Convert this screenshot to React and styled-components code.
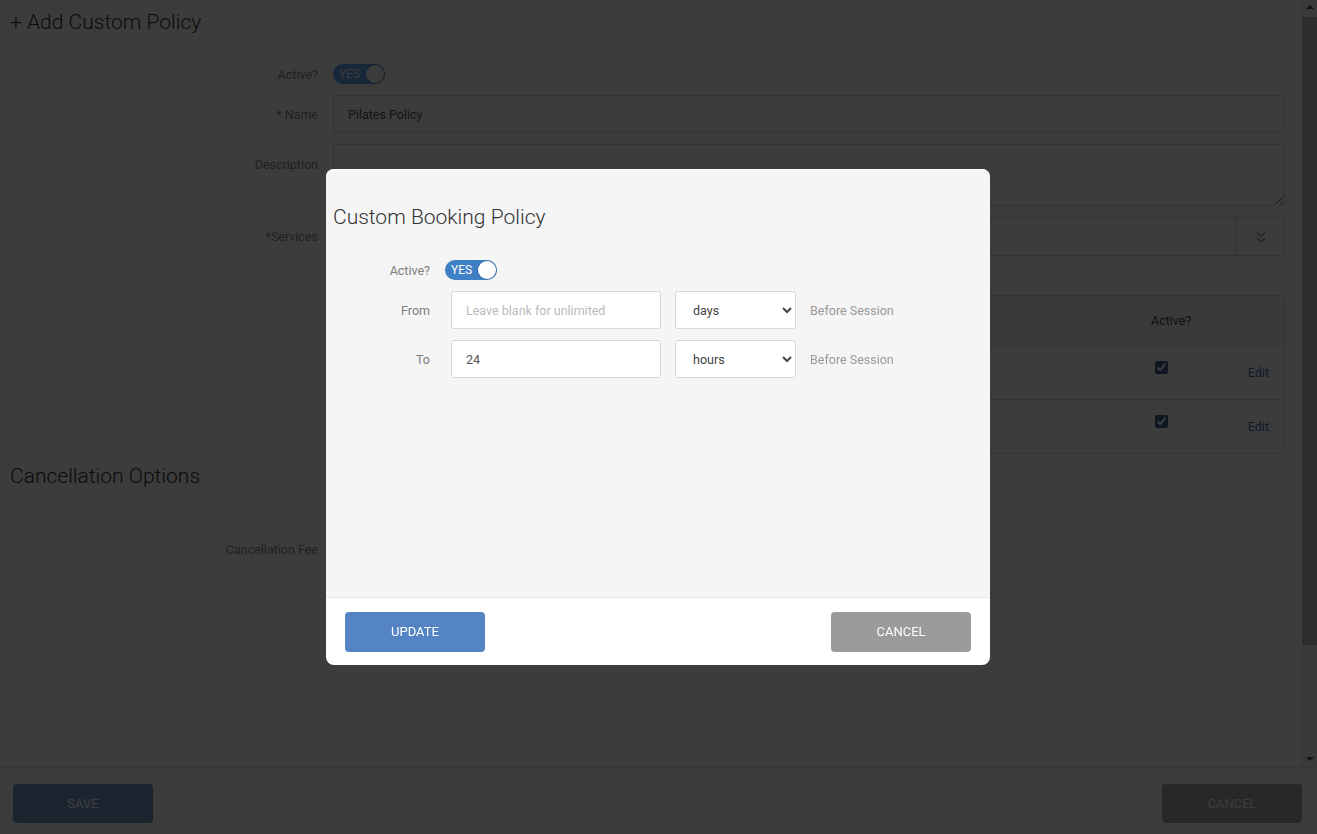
import React from "react";
import styled, { createGlobalStyle } from "styled-components";

const GlobalStyle = createGlobalStyle`
  html, body {
    margin: 0;
    padding: 0;
    height: 100%;
    overflow: hidden;
    background: #fff;
    font-family: Roboto, "Liberation Sans", sans-serif;
  }
  * { box-sizing: border-box; }
`;

const font = `Roboto, "Liberation Sans", sans-serif`;

//배경 페이지
const Page = styled.div`
  display: flex;
  flex-direction: column;
  height: 100vh;
`;

const Main = styled.div`
  flex: 1;
  display: flex;
  min-height: 0;
`;

const ScrollArea = styled.div`
  flex: 1;
  overflow: hidden;
`;

//스크롤바
const Scrollbar = styled.div`
  width: 15px;
  flex: none;
  display: flex;
  flex-direction: column;
  background: #f1f1f1;
`;

const ScrollArrow = styled.div`
  height: 17px;
  flex: none;
  display: flex;
  justify-content: center;
  align-items: ${(p) => (p.down ? "flex-end" : "flex-start")};
  padding: ${(p) => (p.down ? "0 0 6px" : "5px 0 0")};
  &::before {
    content: "";
    border-left: 4px solid transparent;
    border-right: 4px solid transparent;
    ${(p) =>
      p.down ? "border-top: 4px solid #505050;" : "border-bottom: 4px solid #505050;"}
  }
`;

const ScrollThumb = styled.div`
  height: ${(p) => p.size}px;
  flex: none;
  background: #c1c1c1;
`;

const ScrollTrack = styled.div`
  flex: 1;
`;

const Content = styled.div`
  min-height: 895px;
  padding: 8px 17px 0 10px;
`;

const PageTitle = styled.h2`
  margin: 0 0 28px;
  font: 300 21px ${font};
  color: #333;
  line-height: 28px;
`;

const SectionTitle = styled(PageTitle)`
  margin: 0;
`;

const FormRow = styled.div`
  display: flex;
  align-items: ${(p) => (p.top ? "flex-start" : "center")};
  gap: 15px;
  margin-top: ${(p) => p.mt ?? 0}px;
  margin-bottom: ${(p) => p.gap ?? 11}px;
`;

const Label = styled.label`
  width: 308px;
  flex: none;
  text-align: right;
  font: 400 12.5px ${font};
  color: #888;
  padding-top: ${(p) => (p.top ? 13 : 0)}px;
`;

const Field = styled.div`
  flex: 1;
  min-width: 0;
`;

const TextInput = styled.input`
  width: ${(p) => p.w || "100%"};
  height: 38px;
  border: 1px solid #d6d6d6;
  border-radius: 3px;
  padding: 0 14px;
  font: 400 12.5px ${font};
  color: #555;
  background: #fff;
  outline: none;
  &::placeholder {
    color: #bbb;
  }
`;

const TextArea = styled.textarea`
  display: block;
  width: 100%;
  height: 62px;
  border: 1px solid #d6d6d6;
  border-radius: 3px;
  padding: 10px 14px;
  font: 400 12.5px ${font};
  background: #fff;
  resize: vertical;
`;

const MultiSelect = styled.div`
  display: flex;
  height: 39px;
  border: 1px solid #d6d6d6;
  border-radius: 4px;
  background: #fff;
`;

const MultiSelectValue = styled.div`
  flex: 1;
`;

const MultiSelectButton = styled.div`
  width: 48px;
  border-left: 1px solid #d6d6d6;
  display: flex;
  align-items: center;
  justify-content: center;
  padding-top: 2px;
  color: #888;
`;

const Table = styled.div`
  border: 1px solid #ddd;
  border-radius: 4px;
  margin: 39px 0 8px 323px;
  overflow: hidden;
`;

const TableRow = styled.div`
  display: grid;
  grid-template-columns: 1fr 1fr 78px 40px;
  padding: 0 15px;
  height: ${(p) => (p.head ? 49 : 54)}px;
  align-items: center;
  background: ${(p) => (p.head ? "#f7f7f7" : "#fff")};
  border-top: ${(p) => (p.head ? "none" : "1px solid #ddd")};
  font: 400 12.5px ${font};
  color: #444;
`;

const CheckCell = styled.div`
  align-self: start;
  padding-top: 12px;
  input {
    accent-color: #3b5e8e;
    width: 13px;
    height: 13px;
  }
`;

const EditLink = styled.a`
  justify-self: end;
  color: #3f6fb5;
  font: 400 12.5px ${font};
  text-decoration: none;
`;

const Footer = styled.div`
  flex: none;
  height: 67px;
  border-top: 1px solid #e2e2e2;
  display: flex;
  align-items: flex-start;
  justify-content: space-between;
  padding: 16px 15px 0 13px;
`;

const Button = styled.button`
  width: 140px;
  height: ${(p) => p.h || 39}px;
  border: none;
  border-radius: 4px;
  background: ${(p) => p.bg};
  color: #fff;
  font: 400 13px ${font};
  text-transform: uppercase;
  cursor: pointer;
`;

const Toggle = styled.div`
  position: relative;
  width: 52px;
  height: 20px;
  border-radius: 10px;
  background: ${(p) => p.bg};
  display: flex;
  align-items: center;
  padding-left: 6px;
  color: #fff;
  font: 400 12px ${font};
  flex: none;
`;

const Knob = styled.span`
  position: absolute;
  right: 1px;
  top: 1px;
  width: 18px;
  height: 18px;
  border-radius: 50%;
  background: #fff;
  box-shadow: 0 0 0 1px rgba(0, 0, 0, 0.15);
`;

//모달
const Overlay = styled.div`
  position: fixed;
  inset: 0;
  background: rgba(0, 0, 0, 0.765);
  display: flex;
  align-items: center;
  justify-content: center;
  z-index: 10;
`;

const Modal = styled.div`
  width: 664px;
  height: 496px;
  margin-right: 1px;
  border-radius: 8px;
  background: #fff;
  display: flex;
  flex-direction: column;
  overflow: hidden;
`;

const ModalBody = styled.div`
  flex: 1;
  background: #f5f5f5;
  padding: 34px 7px 0;
  border-bottom: 1px solid #e6e6e6;
`;

const ModalTitle = styled.h3`
  margin: 0 0 29px;
  font: 300 21px ${font};
  color: #333;
  line-height: 28px;
`;

const ModalRow = styled.div`
  display: flex;
  align-items: center;
  margin-bottom: 11px;
`;

const ModalLabel = styled.span`
  width: 97px;
  text-align: right;
  font: 400 12.5px ${font};
  color: #7d7d7d;
  margin-right: ${(p) => p.mr}px;
`;

const UnitSelect = styled.select`
  width: 121px;
  height: 38px;
  margin-left: 14px;
  border: 1px solid #d6d6d6;
  border-radius: 3px;
  background: #fff;
  padding: 0 8px 0 13px;
  font: 400 12.5px ${font};
  color: #444;
`;

const Hint = styled.span`
  margin-left: 14px;
  font: 400 12.5px ${font};
  color: #999;
`;

const ModalFooter = styled.div`
  height: 67px;
  display: flex;
  align-items: center;
  justify-content: space-between;
  padding: 0 19px;
`;

const ChevronsDown = () => (
  <svg width="10" height="13" viewBox="0 0 10 13" fill="none" stroke="currentColor" strokeWidth="1.2">
    <path d="M1 1.5 5 5.5 9 1.5" />
    <path d="M1 7 5 11 9 7" />
  </svg>
);

const policies = [
  { name: "Pilates Reformer", window: "24 hours" },
  { name: "Pilates Mat", window: "24 hours" },
];

const App = () => {
  return (
    <>
      <GlobalStyle />
      <Page>
        <Main>
          <ScrollArea>
            <Content>
              <PageTitle>+ Add Custom Policy</PageTitle>
              <FormRow>
                <Label>Active?</Label>
                <Toggle bg="#5ca6f2">
                  YES
                  <Knob />
                </Toggle>
              </FormRow>
              <FormRow>
                <Label>* Name</Label>
                <Field>
                  <TextInput defaultValue="Pilates Policy" />
                </Field>
              </FormRow>
              <FormRow top>
                <Label top>Description</Label>
                <Field>
                  <TextArea />
                </Field>
              </FormRow>
              <FormRow gap={0}>
                <Label>*Services</Label>
                <Field>
                  <MultiSelect>
                    <MultiSelectValue />
                    <MultiSelectButton>
                      <ChevronsDown />
                    </MultiSelectButton>
                  </MultiSelect>
                </Field>
              </FormRow>

              <Table>
                <TableRow head>
                  <span>Service</span>
                  <span>Window</span>
                  <span>Active?</span>
                  <span />
                </TableRow>
                {policies.map((p) => (
                  <TableRow key={p.name}>
                    <span>{p.name}</span>
                    <span>{p.window}</span>
                    <CheckCell>
                      <input type="checkbox" defaultChecked />
                    </CheckCell>
                    <EditLink href="#">Edit</EditLink>
                  </TableRow>
                ))}
              </Table>

              <SectionTitle>Cancellation Options</SectionTitle>
              <FormRow mt={40} gap={0}>
                <Label>Cancellation Fee</Label>
                <Field>
                  <TextInput w="200px" />
                </Field>
              </FormRow>
            </Content>
          </ScrollArea>
          <Scrollbar>
            <ScrollArrow />
            <ScrollThumb size={628} />
            <ScrollTrack />
            <ScrollArrow down />
          </Scrollbar>
        </Main>
        <Footer>
          <Button bg="#739dcc">Save</Button>
          <Button bg="#aaaaaa">Cancel</Button>
        </Footer>
      </Page>

      <Overlay>
        <Modal>
          <ModalBody>
            <ModalTitle>Custom Booking Policy</ModalTitle>
            <ModalRow>
              <ModalLabel mr={15}>Active?</ModalLabel>
              <Toggle bg="#3f7fc6">
                YES
                <Knob />
              </Toggle>
            </ModalRow>
            <ModalRow>
              <ModalLabel mr={21}>From</ModalLabel>
              <TextInput w="210px" placeholder="Leave blank for unlimited" />
              <UnitSelect defaultValue="days">
                <option value="days">days</option>
                <option value="hours">hours</option>
              </UnitSelect>
              <Hint>Before Session</Hint>
            </ModalRow>
            <ModalRow>
              <ModalLabel mr={21}>To</ModalLabel>
              <TextInput w="210px" defaultValue="24" />
              <UnitSelect defaultValue="hours">
                <option value="days">days</option>
                <option value="hours">hours</option>
              </UnitSelect>
              <Hint>Before Session</Hint>
            </ModalRow>
          </ModalBody>
          <ModalFooter>
            <Button bg="#5584c4" h={40}>Update</Button>
            <Button bg="#9b9b9b" h={40}>Cancel</Button>
          </ModalFooter>
        </Modal>
      </Overlay>
    </>
  );
};

export default App;
